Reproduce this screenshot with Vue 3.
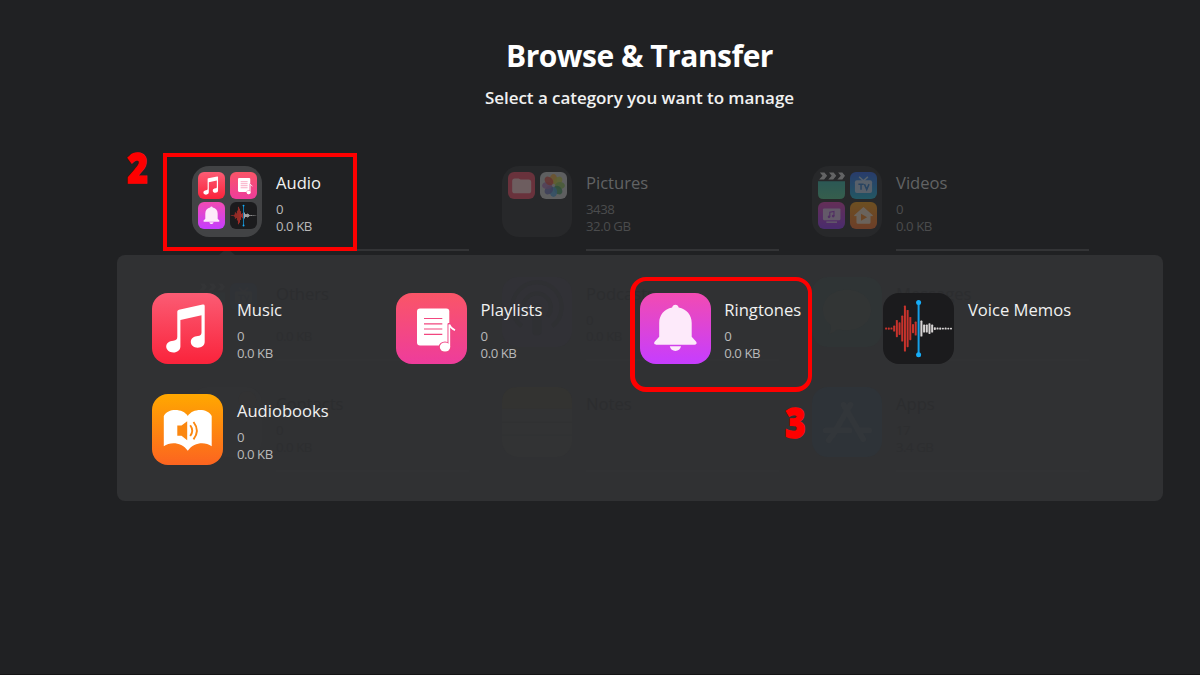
<script setup>
const categories = [
  { name: 'Audio', count: '0', size: '0.0 KB', icons: ['music', 'playlist', 'bell', 'memo'], state: 'active' },
  { name: 'Pictures', count: '3438', size: '32.0 GB', icons: ['folder', 'photos'], state: 'dim' },
  { name: 'Videos', count: '0', size: '0.0 KB', icons: ['clapper', 'tv', 'musicvideo', 'home'], state: 'dim' },
  { name: 'Others', count: '', size: '0.0 KB', icons: ['clapper', 'tv'], state: 'ghost' },
  { name: 'Podcasts', count: '0', size: '0.0 KB', single: 'podcast', state: 'ghost' },
  { name: 'Messages', count: '', size: '', single: 'messages', state: 'ghost' },
  { name: 'Contacts', count: '0', size: '0.0 KB', single: 'contacts', state: 'ghost' },
  { name: 'Notes', count: '', size: '', single: 'notes', state: 'ghost' },
  { name: 'Apps', count: '17', size: '3.4 GB', single: 'apps', state: 'ghost' },
]

const items = [
  { name: 'Music', icon: 'music', count: '0', size: '0.0 KB' },
  { name: 'Playlists', icon: 'playlist', count: '0', size: '0.0 KB' },
  { name: 'Ringtones', icon: 'bell', count: '0', size: '0.0 KB', marked: true },
  { name: 'Voice Memos', icon: 'memo', count: '', size: '' },
  { name: 'Audiobooks', icon: 'book', count: '0', size: '0.0 KB' },
]

const redBars = [2, 2.4, 2, 6, 17.4, 12.6, 26, 46, 37.4, 23.4, 9.4, 14]
const whiteBars = [16, 8, 8, 10.6, 8, 2.8, 2, 2.4, 1.6, 2, 1.6, 1.6]
const petals = ['#f0a830', '#c9cf3e', '#8cc152', '#3f9a5c', '#4a9fd8', '#6468b4', '#a56fb0', '#dd4a3e']
</script>

<template>
  <main class="screen">
    <svg class="defs" aria-hidden="true">
      <defs>
        <linearGradient id="g-music" x1="0" y1="0" x2="0" y2="1"><stop offset="0" stop-color="#fb5c74" /><stop offset="1" stop-color="#fa233b" /></linearGradient>
        <linearGradient id="g-list" x1="0" y1="0" x2="0" y2="1"><stop offset="0" stop-color="#fa5567" /><stop offset="1" stop-color="#ee3c9c" /></linearGradient>
        <linearGradient id="g-bell" x1="0" y1="0" x2="0" y2="1"><stop offset="0" stop-color="#f24bb2" /><stop offset="1" stop-color="#c63dff" /></linearGradient>
        <linearGradient id="g-book" x1="0" y1="0" x2="0" y2="1"><stop offset="0" stop-color="#ffa800" /><stop offset="1" stop-color="#fc6420" /></linearGradient>
        <linearGradient id="g-tv" x1="0" y1="0" x2="0" y2="1"><stop offset="0" stop-color="#2b62e8" /><stop offset="1" stop-color="#1fb2cf" /></linearGradient>
        <linearGradient id="g-mv" x1="0" y1="0" x2="0" y2="1"><stop offset="0" stop-color="#d83cae" /><stop offset="1" stop-color="#8d35ef" /></linearGradient>
        <linearGradient id="g-home" x1="0" y1="0" x2="0" y2="1"><stop offset="0" stop-color="#f29a12" /><stop offset="1" stop-color="#f06a28" /></linearGradient>
        <linearGradient id="g-clap" x1="0" y1="0" x2="0" y2="1"><stop offset="0" stop-color="#35b5a8" /><stop offset="1" stop-color="#54c78f" /></linearGradient>
      </defs>
      <symbol id="music" viewBox="0 0 71 71">
        <rect width="71" height="71" rx="16" fill="url(#g-music)" />
        <path fill="#fff" d="M25.3 18.6Q25.3 17 27 16.7L50.6 11.6Q52.7 11.2 52.7 13V48.8C52.7 52.4 49.8 54.7 45.6 54.7C41.8 54.7 38.8 52.1 38.8 49C38.8 45.3 42 43 45.9 42.9C48.2 42.8 49.5 42 49.5 39.5V22.2L28.4 26.9V53.5C28.4 57 25.3 59.5 21.3 59.5C17.3 59.5 14.2 57 14.2 53.6C14.2 50.1 17.3 47.8 21.3 47.7C24.2 47.5 25.3 46.4 25.3 43.8Z" />
      </symbol>
      <symbol id="playlist" viewBox="0 0 71 71">
        <rect width="71" height="71" rx="16" fill="url(#g-list)" />
        <rect x="21" y="15.5" width="32.3" height="37" rx="3" fill="#fff" />
        <path d="M28 25.5H46.3M28 30.8H46.3M28 36H46.3M28 41.4H46.3" stroke="#f2467f" stroke-width="1.2" />
        <g stroke="#f04786" stroke-width="2.2" fill="#fff" stroke-linejoin="round">
          <ellipse cx="49" cy="54" rx="5.2" ry="4.5" /><path d="M52.6 54V31H54Q54.5 34.5 59 37V38Q56 37 54 35V54Z" />
        </g>
        <ellipse cx="49" cy="54" rx="5.2" ry="4.5" fill="#fff" />
        <path d="M53.3 54V31.5Q54.5 35 59 37.3" fill="none" stroke="#fff" stroke-width="1.7" />
      </symbol>
      <symbol id="bell" viewBox="0 0 71 71">
        <rect width="71" height="71" rx="16" fill="url(#g-bell)" />
        <path fill="#fdeafa" d="M35.4 11.7C37.2 11.7 38.3 12.9 38.7 14.5C46.6 15.9 51.7 22 51.7 30V43.8L56 48.6C57.4 50.5 56.3 51.7 54.7 51.7H16.1C14.5 51.7 13.4 50.5 14.8 48.6L19.2 43.8V30C19.2 22 24.2 15.9 32.1 14.5C32.5 12.9 33.6 11.7 35.4 11.7Z" />
        <path fill="#fdeafa" d="M29.8 53.2H41C40.4 56.1 38.2 57.9 35.4 57.9S30.4 56.1 29.8 53.2Z" />
      </symbol>
      <symbol id="memo" viewBox="0 0 71 71">
        <rect width="71" height="71" rx="16" fill="#1b1b1d" />
        <rect v-for="(h, i) in redBars" :key="'r' + i" :x="2.1 + i * 2.69" :y="35.6 - h / 2" width="2" :height="h" rx=".7" fill="#c8332c" />
        <rect v-for="(h, i) in whiteBars" :key="'w' + i" :x="37.4 + i * 2.69" :y="35.6 - h / 2" width="2" :height="h" rx=".7" fill="#d6d3d3" />
        <path d="M35.6 9.5V61.7" stroke="#159fe8" stroke-width="2" /><circle cx="35.6" cy="9.5" r="2.5" fill="#16adf8" /><circle cx="35.6" cy="61.7" r="2.5" fill="#16adf8" />
      </symbol>
      <symbol id="book" viewBox="0 0 71 71">
        <rect width="71" height="71" rx="16" fill="url(#g-book)" />
        <path fill="#fff" d="M11.8 22C14 17.8 18.5 16 23.3 16C28.5 16 33.3 18 35.8 22C38.3 18 43 16 48.2 16C53 16 57.5 17.8 59.7 22V52.2C53 47.5 42 48 35.8 56.7C29.5 48 18.5 47.5 11.8 52.2Z" />
        <path fill="#fb8710" d="M25.3 31.5H29.5L35.2 27.2V46.2L29.5 41.8H25.3Z" />
        <path d="M38.2 31.3Q42.2 36.6 38.2 42M41.5 28Q48.2 36.6 41.5 45.4" fill="none" stroke="#fb8710" stroke-width="1.9" />
      </symbol>
      <symbol id="folder" viewBox="0 0 71 71">
        <rect width="71" height="71" rx="16" fill="#e8475f" />
        <path fill="#f3c3c7" d="M11 24Q11 17 18 17H28L33 20H54Q61 20 61 27V49Q61 56 54 56H18Q11 56 11 49Z" />
      </symbol>
      <symbol id="photos" viewBox="0 0 71 71">
        <rect width="71" height="71" rx="16" fill="#c8c8c8" />
        <ellipse v-for="(c, i) in petals" :key="c" cx="35.5" cy="18.5" rx="9.5" ry="13" :fill="c" fill-opacity=".85" :transform="`rotate(${i * 45} 35.5 35.5)`" />
      </symbol>
      <symbol id="clapper" viewBox="0 0 71 71">
        <path fill="url(#g-clap)" d="M0 24H71V57Q71 71 57 71H14Q0 71 0 57Z" />
        <path fill="#d8d8d8" d="M5 1H17L24 10L16 20H3L12 10ZM29 1H41L48 10L40 20H27L36 10ZM53 1H64L71 10L64 20H51L60 10Z" />
      </symbol>
      <symbol id="tv" viewBox="0 0 71 71">
        <rect width="71" height="71" rx="16" fill="url(#g-tv)" />
        <rect x="13" y="22" width="45" height="33" rx="5" fill="#b6cde6" /><path d="M24 13L35.5 23L47 13" stroke="#b6cde6" stroke-width="4" fill="none" />
        <path d="M22 32H36M29 32V47M38 32L44 46L50 32" stroke="#2a78c8" stroke-width="4" fill="none" />
      </symbol>
      <symbol id="musicvideo" viewBox="0 0 71 71">
        <rect width="71" height="71" rx="16" fill="url(#g-mv)" />
        <rect x="13" y="17" width="46" height="31" rx="3" fill="#d6b9e4" /><rect x="22" y="51" width="28" height="4" fill="#d6b9e4" />
        <path d="M31 39V27L42 25V37" stroke="#a43bd0" stroke-width="3" fill="none" /><circle cx="29" cy="39" r="3.5" fill="#a43bd0" /><circle cx="40" cy="37" r="3.5" fill="#a43bd0" />
      </symbol>
      <symbol id="home" viewBox="0 0 71 71">
        <rect width="71" height="71" rx="16" fill="url(#g-home)" />
        <path fill="#ecd6bd" d="M35.5 13L60 35Q60 38 56 37H54V54Q54 57 51 57H20Q17 57 17 54V37H15Q11 38 11 35Z" /><path fill="#ed7f1c" d="M29 31L45 40L29 49Z" />
      </symbol>
      <symbol id="podcast" viewBox="0 0 71 71">
        <rect width="71" height="71" rx="16" fill="#313136" />
        <g fill="none" stroke="#2f3033" stroke-width="4"><path d="M20 50A25 25 0 1 1 51 50M25 40A14 14 0 1 1 46 40" /></g><circle cx="35.5" cy="32" r="5" fill="#2f3033" /><rect x="31" y="39" width="9" height="20" rx="4" fill="#2f3033" />
      </symbol>
      <symbol id="messages" viewBox="0 0 71 71">
        <rect width="71" height="71" rx="16" fill="#2f3435" />
        <path fill="#323535" d="M35.5 13C50 13 60 22 60 33.5S50 54 35.5 54Q30 54 26 53Q22 57 17 58Q20 54 19 49Q11 43 11 33.5C11 22 21 13 35.5 13Z" />
      </symbol>
      <symbol id="contacts" viewBox="0 0 71 71"><rect width="71" height="71" rx="16" fill="#313234" /><circle cx="56" cy="13" r="9" fill="#323233" /></symbol>
      <symbol id="notes" viewBox="0 0 71 71">
        <rect width="71" height="71" rx="16" fill="#323334" /><path fill="#333331" d="M0 22V16Q0 0 16 0H55Q71 0 71 16V22Z" /><path d="M0 36H71M0 49H71" stroke="#313233" />
      </symbol>
      <symbol id="apps" viewBox="0 0 71 71">
        <rect width="71" height="71" rx="16" fill="#2e3338" />
        <path d="M39 18L21 49M32 18L52 53M14 44H38M47 44H58M19 51L17 54" stroke="#32363a" stroke-width="6" stroke-linecap="round" />
      </symbol>
    </svg>

    <header class="head">
      <h1>Browse &amp; Transfer</h1>
      <p>Select a category you want to manage</p>
    </header>

    <section class="stage">
      <div class="categories">
        <article v-for="c in categories" :key="c.name" class="category" :class="c.state">
          <svg v-if="c.single" class="icon"><use :href="'#' + c.single" /></svg>
          <div v-else class="folder">
            <svg v-for="i in c.icons" :key="i" class="mini"><use :href="'#' + i" /></svg>
          </div>
          <div class="info">
            <h2>{{ c.name }}</h2>
            <p>{{ c.count }}</p>
            <p>{{ c.size }}</p>
          </div>
        </article>
      </div>

      <div class="backdrop"><i class="arrow"></i></div>

      <div class="panel">
        <article v-for="item in items" :key="item.name" class="item">
          <svg class="icon"><use :href="'#' + item.icon" /></svg>
          <div class="info">
            <h2>{{ item.name }}</h2>
            <p>{{ item.count }}</p>
            <p>{{ item.size }}</p>
          </div>
          <template v-if="item.marked">
            <i class="mark-item"></i><b class="step step-item">3</b>
          </template>
        </article>
      </div>
      <i class="mark-category"></i><b class="step step-category">2</b>
    </section>
  </main>
</template>

<style>
body { background: #202123; }
</style>

<style scoped>
.screen { width: 1200px; height: 675px; overflow: hidden; background: #202123; color: #f1f1f1; font-family: "Open Sans", "Noto Sans", sans-serif; box-sizing: border-box; border-bottom: 1px solid #141415; }
.defs { position: absolute; width: 0; height: 0; }
h1, h2, p { margin: 0; }
.head { padding: 36px 0 0 79px; text-align: center; height: 130px; box-sizing: border-box; }
.head h1 { font-size: 30px; line-height: 40px; font-weight: 700; letter-spacing: -.5px; color: #fff; }
.head p { margin-top: 10px; font-size: 17px; line-height: 24px; font-weight: 600; letter-spacing: -.05px; }
.stage { position: relative; height: 545px; isolation: isolate; }
.categories { position: relative; z-index: 1; display: grid; grid-template-columns: repeat(3, 310px); grid-auto-rows: 110.5px; padding: 36px 0 0 192px; }
.category, .item { position: relative; display: flex; gap: 13.5px; }
.category { gap: 14px; }
.folder { width: 70px; height: 71px; flex: none; box-sizing: border-box; padding: 6px; display: grid; grid-template-columns: 27px 27px; grid-template-rows: 27px 27px; gap: 3px 5px; border-radius: 17px; background: #424345; }
.mini { width: 27px; height: 27px; display: block; }
.icon { width: 71px; height: 71px; flex: none; display: block; }
.category .icon { width: 70px; height: 70px; }
.info h2 { font-size: 16.6px; line-height: 24px; font-weight: 400; margin: 5px 0 6px; white-space: nowrap; }
.info p { font-size: 13.2px; line-height: 16.5px; height: 16.5px; letter-spacing: -.45px; color: #b9b9ba; white-space: nowrap; }
.category .info { width: 193px; height: 82.5px; border-bottom: 2px solid #333436; }
.dim .folder { background: #27282a; }
.dim .mini { opacity: .34; }
.dim .info h2 { color: #626364; }
.dim .info p { color: #4b4c4d; }
.ghost { z-index: 1; }
.ghost .folder { background: transparent; }
.ghost .mini { opacity: .015; }
.ghost .info { border-color: #313234; }
.ghost .info h2 { color: #2c2d2f; }
.ghost .info p { color: #2d2e30; }
.backdrop { position: absolute; left: 117px; top: 125px; width: 1045.5px; height: 245.5px; border-radius: 8px; background: #303133; }
.arrow { position: absolute; left: 102px; top: -7px; border: 8px solid transparent; border-top: 0; border-bottom: 7px solid #2b2c2e; }
.panel { position: absolute; z-index: 2; left: 117px; top: 125px; width: 1045.5px; height: 245.5px; box-sizing: border-box; padding: 38.4px 0 0 35.4px; display: grid; grid-template-columns: repeat(4, 243.7px); grid-auto-rows: 101px; align-content: start; }
.mark-category { position: absolute; z-index: 3; left: 163px; top: 23px; width: 186px; height: 90px; border: 4px solid #fe0000; }
.mark-item { position: absolute; left: -10px; top: -16px; width: 173px; height: 106px; border: 4.5px solid #fe0000; border-width: 4px 4px 5px 5px; border-radius: 16px; }
.step { position: absolute; z-index: 3; color: #fe0000; font-size: 42px; line-height: 44px; font-weight: 800; transform: scaleX(.84); transform-origin: 0 0; -webkit-text-stroke: 1.4px #fe0000; }
.step-category { left: 127px; top: 15px; }
.step-item { left: 145px; top: 107px; }
</style>
